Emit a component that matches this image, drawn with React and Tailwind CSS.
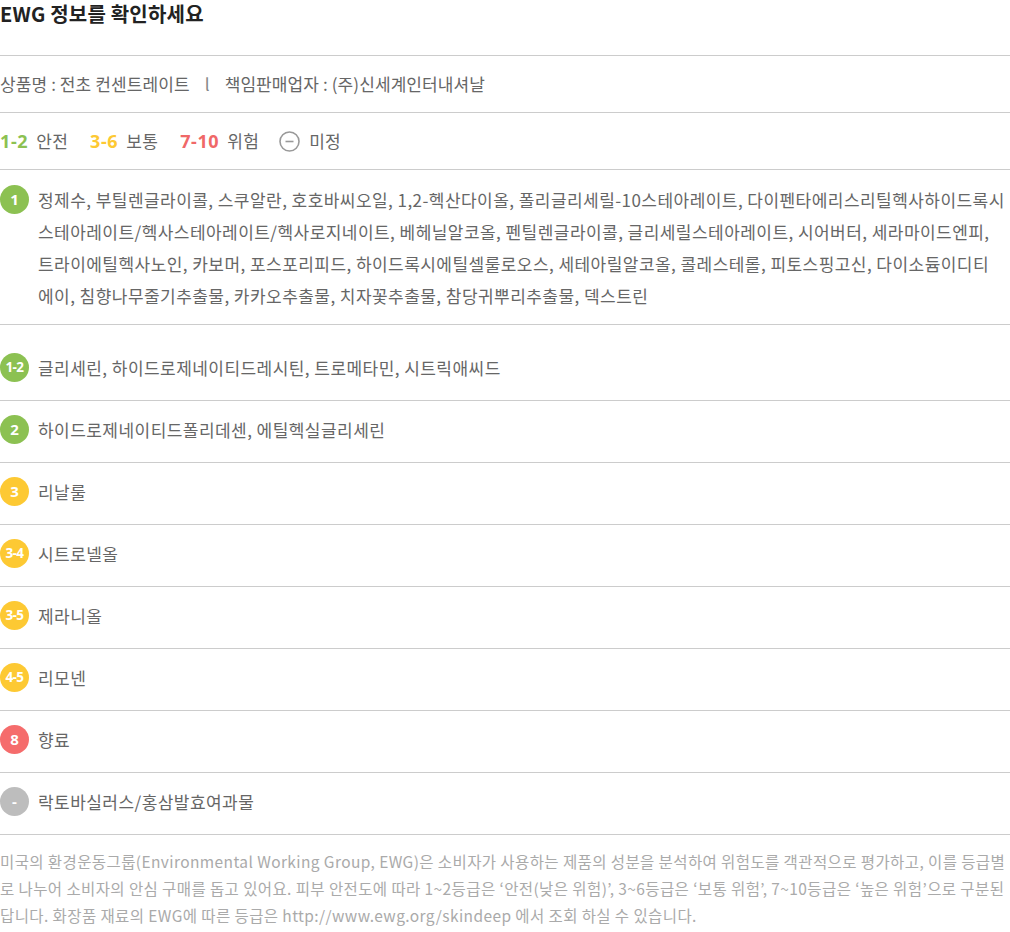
import React from "react";

const font = { fontFamily: '"Noto Sans CJK KR", "Noto Sans", sans-serif' };
const numFont = { fontFamily: '"Open Sans", "Noto Sans", sans-serif' };

const colors = {
  green: "bg-[#8cc152]",
  yellow: "bg-[#fdc933]",
  red: "bg-[#f56c6c]",
  gray: "bg-[#bdbdbd]",
};

// lines are split as they wrap on the reference page
const ingredients = [
  {
    grade: "1",
    color: "green",
    lines: [
      "정제수, 부틸렌글라이콜, 스쿠알란, 호호바씨오일, 1,2-헥산다이올, 폴리글리세릴-10스테아레이트, 다이펜타에리스리틸헥사하이드록시",
      "스테아레이트/헥사스테아레이트/헥사로지네이트, 베헤닐알코올, 펜틸렌글라이콜, 글리세릴스테아레이트, 시어버터, 세라마이드엔피,",
      "트라이에틸헥사노인, 카보머, 포스포리피드, 하이드록시에틸셀룰로오스, 세테아릴알코올, 콜레스테롤, 피토스핑고신, 다이소듐이디티",
      "에이, 침향나무줄기추출물, 카카오추출물, 치자꽃추출물, 참당귀뿌리추출물, 덱스트린",
    ],
  },
  { grade: "1-2", color: "green", lines: ["글리세린, 하이드로제네이티드레시틴, 트로메타민, 시트릭애씨드"] },
  { grade: "2", color: "green", lines: ["하이드로제네이티드폴리데센, 에틸헥실글리세린"] },
  { grade: "3", color: "yellow", lines: ["리날룰"] },
  { grade: "3-4", color: "yellow", lines: ["시트로넬올"] },
  { grade: "3-5", color: "yellow", lines: ["제라니올"] },
  { grade: "4-5", color: "yellow", lines: ["리모넨"] },
  { grade: "8", color: "red", lines: ["향료"] },
  { grade: "-", color: "gray", lines: ["락토바실러스/홍삼발효여과물"] },
];

const notice = [
  "미국의 환경운동그룹(Environmental Working Group, EWG)은 소비자가 사용하는 제품의 성분을 분석하여 위험도를 객관적으로 평가하고, 이를 등급별",
  "로 나누어 소비자의 안심 구매를 돕고 있어요. 피부 안전도에 따라 1~2등급은 ‘안전(낮은 위험)’, 3~6등급은 ‘보통 위험’, 7~10등급은 ‘높은 위험’으로 구분된",
  "답니다. 화장품 재료의 EWG에 따른 등급은 http://www.ewg.org/skindeep 에서 조회 하실 수 있습니다.",
];

const Badge = ({ grade, color }) => (
  <span
    className={`flex h-[29px] w-[29px] shrink-0 items-center justify-center rounded-full text-white font-bold ${colors[color]} ${
      grade.length > 2 ? "text-[13.5px] tracking-[-0.6px]" : "text-[15px]"
    }`}
    style={numFont}
  >
    {grade}
  </span>
);

const App = () => {
  return (
    <div className="w-[1010px] bg-white text-[#666]" style={font}>
      <h2 className="text-[20px] font-bold leading-[28px] text-[#222] pb-[27px] tracking-[0.2px]">
        EWG 정보를 확인하세요
      </h2>

      <div className="border-t border-[#cccccc]">
        <div className="flex items-center h-[57px] text-[17px] tracking-[0.1px] border-b border-[#cccccc]">
          <span>상품명 : 전초 컨센트레이트</span>
          <span className="mx-[15px] text-[#888]">l</span>
          <span>책임판매업자 : (주)신세계인터내셔날</span>
        </div>

        <div className="flex items-center h-[57px] text-[17px] tracking-[0.3px] border-b border-[#cccccc]">
          <span className="font-bold text-[18px] text-[#8cc152] mr-[8px] tracking-[0.6px]" style={numFont}>1-2</span>
          <span className="mr-[22px]">안전</span>
          <span className="font-bold text-[18px] text-[#fdc933] mr-[8px] tracking-[0.6px]" style={numFont}>3-6</span>
          <span className="mr-[22px]">보통</span>
          <span className="font-bold text-[18px] text-[#f06868] mr-[8px] tracking-[0.6px]" style={numFont}>7-10</span>
          <span className="mr-[20px]">위험</span>
          <svg width="21" height="21" viewBox="0 0 21 21" className="mr-[9px]">
            <circle cx="10.5" cy="10.5" r="9.5" fill="none" stroke="#999" strokeWidth="1.6" />
            <line x1="6.5" y1="10.5" x2="14.5" y2="10.5" stroke="#999" strokeWidth="1.6" />
          </svg>
          <span>미정</span>
        </div>

        {ingredients.map((item, i) => (
          <div
            key={item.grade}
            className={`flex items-start gap-[9px] border-b border-[#cccccc] ${
              i === 0 ? "pt-[14px] pb-[12px]" : i === 1 ? "pt-[27px] pb-[16px]" : "pt-[13px] pb-[16px]"
            }`}
          >
            <span className="mt-[1px]">
              <Badge grade={item.grade} color={item.color} />
            </span>
            <p className="text-[17px] leading-[32px] tracking-[0.45px] text-[#666]">
              {item.lines.map((line) => (
                <span key={line} className="block whitespace-nowrap">
                  {line}
                </span>
              ))}
            </p>
          </div>
        ))}

        <p className="pt-[13px] text-[15.5px] leading-[27px] text-[#aaa] tracking-[0.4px]">
          {notice.map((line) => (
            <span key={line} className="block whitespace-nowrap">
              {line}
            </span>
          ))}
        </p>
      </div>
    </div>
  );
};

export default App;
